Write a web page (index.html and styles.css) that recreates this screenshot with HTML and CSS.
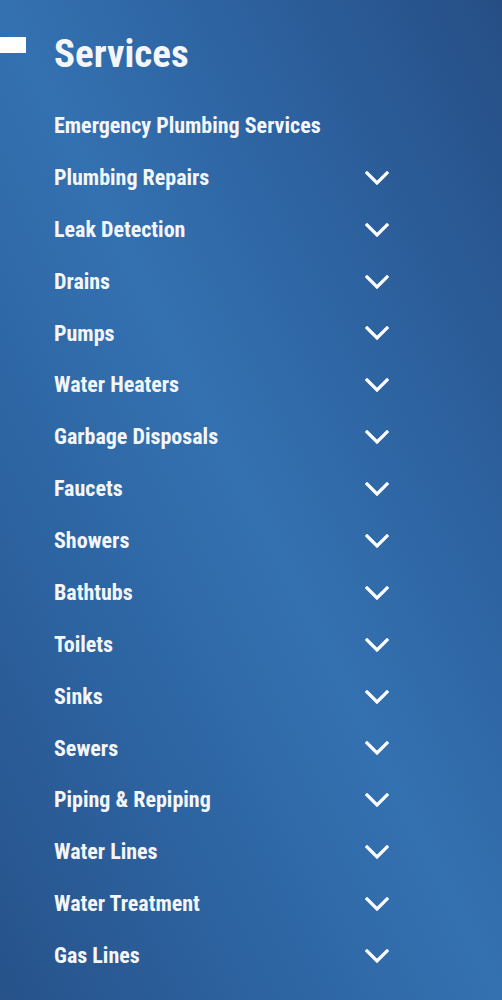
FILE: index.html
```html
<!DOCTYPE html>
<html>
<head>
  <link rel="stylesheet" href="styles.css">
</head>
<body>
  <div class="services">
    <div class="services-head">
      <span class="head-bar"></span>
      <h2 class="head-title">Services</h2>
    </div>

    <ul class="service-list">
      <li class="service-item"><span>Emergency Plumbing Services</span></li>
      <li class="service-item"><span>Plumbing Repairs</span><svg class="chevron" viewBox="0 0 24 14"><polyline points="2,2 12,12 22,2"/></svg></li>
      <li class="service-item"><span>Leak Detection</span><svg class="chevron" viewBox="0 0 24 14"><polyline points="2,2 12,12 22,2"/></svg></li>
      <li class="service-item"><span>Drains</span><svg class="chevron" viewBox="0 0 24 14"><polyline points="2,2 12,12 22,2"/></svg></li>
      <li class="service-item"><span>Pumps</span><svg class="chevron" viewBox="0 0 24 14"><polyline points="2,2 12,12 22,2"/></svg></li>
      <li class="service-item"><span>Water Heaters</span><svg class="chevron" viewBox="0 0 24 14"><polyline points="2,2 12,12 22,2"/></svg></li>
      <li class="service-item"><span>Garbage Disposals</span><svg class="chevron" viewBox="0 0 24 14"><polyline points="2,2 12,12 22,2"/></svg></li>
      <li class="service-item"><span>Faucets</span><svg class="chevron" viewBox="0 0 24 14"><polyline points="2,2 12,12 22,2"/></svg></li>
      <li class="service-item"><span>Showers</span><svg class="chevron" viewBox="0 0 24 14"><polyline points="2,2 12,12 22,2"/></svg></li>
      <li class="service-item"><span>Bathtubs</span><svg class="chevron" viewBox="0 0 24 14"><polyline points="2,2 12,12 22,2"/></svg></li>
      <li class="service-item"><span>Toilets</span><svg class="chevron" viewBox="0 0 24 14"><polyline points="2,2 12,12 22,2"/></svg></li>
      <li class="service-item"><span>Sinks</span><svg class="chevron" viewBox="0 0 24 14"><polyline points="2,2 12,12 22,2"/></svg></li>
      <li class="service-item"><span>Sewers</span><svg class="chevron" viewBox="0 0 24 14"><polyline points="2,2 12,12 22,2"/></svg></li>
      <li class="service-item"><span>Piping &amp; Repiping</span><svg class="chevron" viewBox="0 0 24 14"><polyline points="2,2 12,12 22,2"/></svg></li>
      <li class="service-item"><span>Water Lines</span><svg class="chevron" viewBox="0 0 24 14"><polyline points="2,2 12,12 22,2"/></svg></li>
      <li class="service-item"><span>Water Treatment</span><svg class="chevron" viewBox="0 0 24 14"><polyline points="2,2 12,12 22,2"/></svg></li>
      <li class="service-item"><span>Gas Lines</span><svg class="chevron" viewBox="0 0 24 14"><polyline points="2,2 12,12 22,2"/></svg></li>
    </ul>
  </div>
</body>
</html>
```

FILE: styles.css
```css
html, body {
  margin: 0;
  height: 100%;
}
body {
  background: linear-gradient(to top right, #27528a 0%, #2d64a2 28%, #3471b1 50%, #2d62a0 72%, #264e85 100%);
  color: #f4f6fa;
  font-family: "Roboto Condensed", Roboto, "Liberation Sans", sans-serif;
  font-stretch: condensed;
  font-weight: 700;
}
.services {
  padding-top: 31px;
}
.services-head {
  display: flex;
  align-items: flex-start;
}
.head-bar {
  width: 26px;
  height: 16px;
  margin-top: 6px;
  margin-right: 28px;
  background-color: #ffffff;
}
.head-title {
  margin: 0;
  font-size: 39px;
  line-height: 46px;
  font-weight: 700;
}
.service-list {
  list-style: none;
  margin: 23px 0 0;
  padding: 0 0 0 54px;
  width: 335px;
}
.service-item {
  display: flex;
  justify-content: space-between;
  align-items: center;
  height: 51.88px;
  font-size: 22px;
  line-height: 51.88px;
}
.chevron {
  width: 24px;
  height: 14px;
  fill: none;
  stroke: #ffffff;
  stroke-width: 3.2;
  stroke-linecap: square;
}
```
